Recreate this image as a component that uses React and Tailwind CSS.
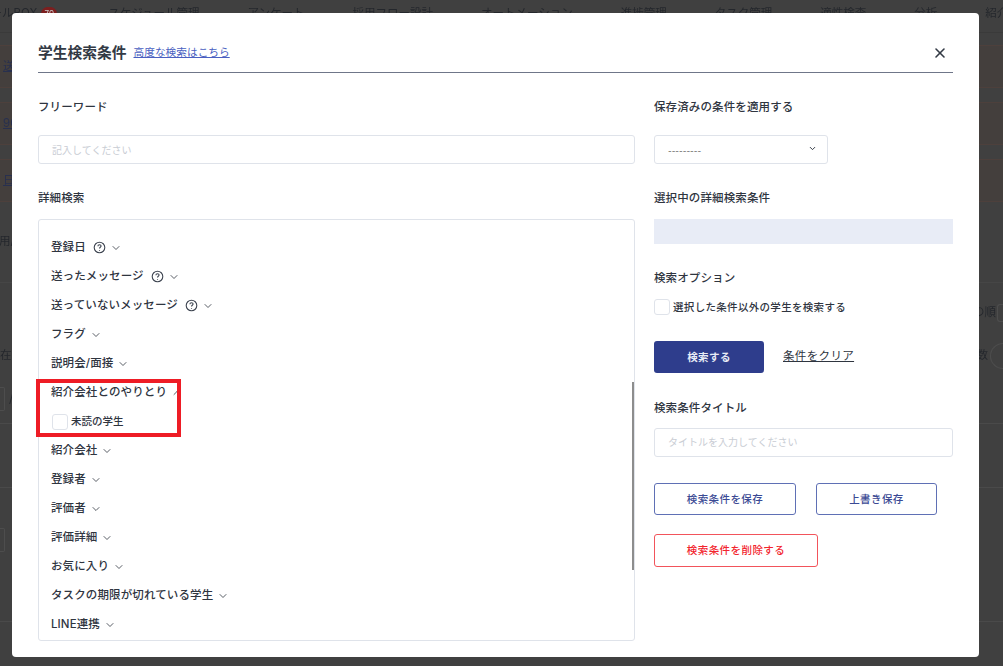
import { ChevronDown, ChevronUp, X } from "lucide-react";

const navItems = ["スケジュール管理", "アンケート", "採用フロー設計", "オートメーション", "進捗管理", "タスク管理", "適性検査", "分析", "紹介会社"];

const filters = [
  { label: "登録日", help: true },
  { label: "送ったメッセージ", help: true },
  { label: "送っていないメッセージ", help: true },
  { label: "フラグ" },
  { label: "説明会/面接" },
  { label: "紹介会社とのやりとり", open: true },
  { label: "紹介会社" },
  { label: "登録者" },
  { label: "評価者" },
  { label: "評価詳細" },
  { label: "お気に入り" },
  { label: "タスクの期限が切れている学生" },
  { label: "LINE連携" },
];

const HelpIcon = () => (
  <svg width="13" height="13" viewBox="0 0 13 13" fill="none" stroke="#3f4652" strokeWidth="1.1" className="ml-[7px] shrink-0">
    <circle cx="6.5" cy="6.5" r="5.3" />
    <path d="M4.9 5.2c0-.9.7-1.4 1.6-1.4s1.6.5 1.6 1.3c0 1.2-1.6 1.2-1.6 2.4" />
    <path d="M6.5 9v.7" />
  </svg>
);

const Checkbox = () => (
  <span className="w-4 h-4 rounded-[3px] border border-[#dfe3ea] bg-white shrink-0" />
);

const Label = ({ children }) => (
  <p className="text-[11.5px] leading-4 font-medium tracking-[0.01em] text-[#2f353f]">{children}</p>
);

const FilterRow = ({ item }) => (
  <div>
    <div className="h-[29px] flex items-center text-[11.5px] font-medium tracking-[0.01em] text-[#2f353f]">
      <span>{item.label}</span>
      {item.help && <HelpIcon />}
      {item.open ? (
        <ChevronUp size={12} strokeWidth={1.6} className="ml-[4px]" />
      ) : (
        <ChevronDown size={12} strokeWidth={1.6} className="ml-[4px]" />
      )}
    </div>
    {item.open && (
      <div className="h-[29px] ml-px flex items-center gap-[3px] text-[10.5px] font-medium text-[#2f353f]">
        <Checkbox />
        <span>未読の学生</span>
      </div>
    )}
  </div>
);

const Backdrop = () => (
  <div className="h-full text-[#24272c] text-[11.5px] blur-[0.6px]">
    <div className="h-[33px] flex items-start gap-12 pt-[5px] -ml-[21px] whitespace-nowrap border-b border-[#3a3a3a]">
      <span className="flex items-center gap-1 mr-[3px]">
        メールBOX
        <span className="w-[16px] h-[13px] rounded-full bg-[#7d1f1f] text-[8px] text-[#cfcfcf] text-center leading-[13px]">70</span>
      </span>
      {navItems.map((item) => (
        <span key={item}>{item}</span>
      ))}
    </div>
    <div className="pt-[12px] flex flex-col gap-[14px]">
      {["送", "90", "日"].map((t) => (
        <div key={t} className="h-[43px] pl-[3px] flex items-center border-y border-[#4d403c] bg-[#443f3d] text-[#28304f]">
          <span className="underline">{t}</span>
        </div>
      ))}
    </div>
    <div className="h-[81px] flex items-center border-b border-[#464646]">
      <span className="-ml-px">用/</span>
    </div>
    <div className="h-[60px] flex items-center justify-end">
      <span className="mr-px">の順</span>
      <span className="w-[6px] h-[18px] rounded-l-[3px] border border-r-0 border-[#4d4d4d]" />
    </div>
    <div className="h-[26px] flex justify-between items-center">
      <span>在の</span>
      <span className="flex items-center gap-[2px]">
        数
        <span className="w-[13px] h-[26px] rounded-l-full border border-r-0 border-[#4d4d4d]" />
      </span>
    </div>
    <div className="h-[55px] pt-[18px] flex items-start gap-[4px] border-b border-[#4a4a4a]">
      <span className="w-[5px] h-[24px] rounded-r-[2px] border border-l-0 border-[#4d4d4d]" />
      <span className="leading-6">/</span>
    </div>
    <div className="h-[64px] border-b border-[#4a4a4a]" />
    <div className="h-[134px] pt-[40px] border-b border-[#4a4a4a]">
      <span className="block w-[5px] h-[24px] rounded-r-[2px] border border-l-0 border-[#4d4d4d]" />
    </div>
  </div>
);

export default function App() {
  return (
    <div className="relative h-[666px] w-[1003px] overflow-hidden bg-[#404040] font-['Inter','Noto_Sans_CJK_JP',sans-serif]">
      <Backdrop />

      <div className="absolute left-[12px] top-[13px] w-[967px] h-[644px] rounded-[4px] bg-white px-[26px]">
        <div className="h-[60px] pt-[29px] flex items-start border-b border-[#6f7689]">
          <h2 className="text-[14.75px] leading-[22px] font-bold text-[#333a45]">学生検索条件</h2>
          <a className="ml-[7px] mt-[3px] text-[10.7px] leading-4 underline text-[#4a5fc1]">高度な検索はこちら</a>
          <X size={16} strokeWidth={2.4} className="ml-auto mt-[3px] mr-[5px] text-[#333a45]" />
        </div>

        <div className="flex gap-[19px] pt-[26px]">
          <div className="w-[597px]">
            <Label>フリーワード</Label>
            <div className="mt-5 h-[29px] px-[13px] pt-px flex items-center rounded-[3px] border border-[#dfe3ea] text-[10px] text-[#c9cdd4]">
              記入してください
            </div>
            <div className="mt-[26px]"><Label>詳細検索</Label></div>
            <div className="relative mt-[13px] h-[422px] overflow-hidden rounded-[3px] border border-[#dfe3ea] pl-[12px] pt-[13px]">
              {filters.map((item) => (
                <FilterRow key={item.label} item={item} />
              ))}
              <div className="absolute right-0 top-[162px] w-[2px] h-[188px] bg-[#8d8d8d]" />
            </div>
          </div>

          <div className="w-[299px]">
            <Label>保存済みの条件を適用する</Label>
            <div className="mt-5 w-[174px] h-[29px] pl-[13px] pr-[10px] flex items-center justify-between rounded-[3px] border border-[#dfe3ea] text-[8px] text-[#555]">
              <span className="pt-[2px]">---------</span>
              <ChevronDown size={9} strokeWidth={2.6} className="-mt-[2px] text-[#333a45]" />
            </div>
            <div className="mt-[26px]"><Label>選択中の詳細検索条件</Label></div>
            <div className="mt-[13px] h-[25px] bg-[#e8ecf6]" />
            <div className="mt-[26px]"><Label>検索オプション</Label></div>
            <div className="mt-[13px] flex items-center gap-[3px] text-[10.5px] font-medium tracking-[0.03em] text-[#2f353f]">
              <Checkbox />
              <span className="pt-px">選択した条件以外の学生を検索する</span>
            </div>
            <div className="mt-[25px] flex items-center gap-[19px]">
              <button className="w-[110px] h-[32px] pt-[2px] rounded-[3px] bg-[#2e3d8c] text-[10.5px] font-bold tracking-[0.04em] text-[#e8ecf6]">検索する</button>
              <a className="text-[11.5px] tracking-[0.03em] underline text-[#2f353f]">条件をクリア</a>
            </div>
            <div className="mt-[27px]"><Label>検索条件タイトル</Label></div>
            <div className="mt-[12px] h-[29px] px-[13px] pt-px flex items-center rounded-[3px] border border-[#dfe3ea] text-[10px] text-[#c9cdd4]">
              タイトルを入力してください
            </div>
            <div className="mt-[26px] flex gap-[20px]">
              <button className="w-[142px] h-[32px] pt-[2px] rounded-[3px] border border-[#5f70b5] text-[10.5px] font-medium tracking-[0.04em] text-[#3b4a94]">検索条件を保存</button>
              <button className="w-[121px] h-[32px] pt-[2px] rounded-[3px] border border-[#5f70b5] text-[10.5px] font-medium tracking-[0.04em] text-[#3b4a94]">上書き保存</button>
            </div>
            <button className="mt-[19px] w-[164px] h-[33px] pt-[2px] rounded-[3px] border border-[#f2545b] text-[10.5px] font-medium tracking-[0.04em] text-[#f2252e]">検索条件を削除する</button>
          </div>
        </div>
      </div>

      {/* highlight drawn over the screenshot */}
      <div className="absolute left-[36px] top-[379px] w-[145px] h-[58px] border-[4px] border-[#ee1c25]" />
    </div>
  );
}
